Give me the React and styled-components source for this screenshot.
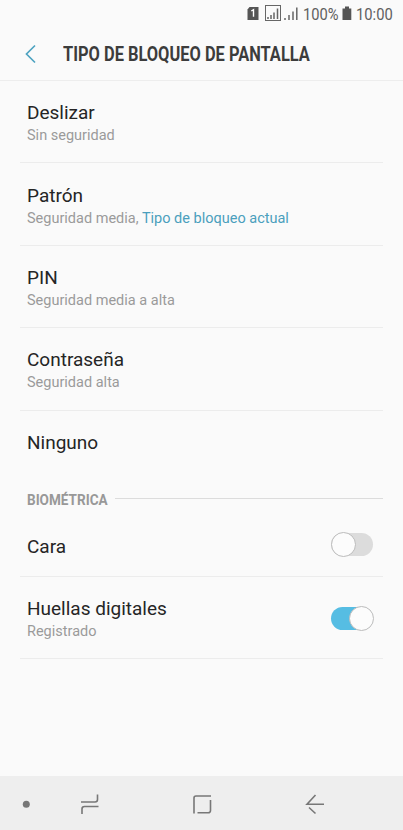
import styled, { createGlobalStyle } from "styled-components";

const GlobalStyle = createGlobalStyle`
    * {
        box-sizing: border-box;
    }

    body {
        margin: 0;
        background-color: #fafafa;
        font-family: Roboto, sans-serif;
    }
`;

const Screen = styled.div`
    display: flex;
    flex-direction: column;
    height: 830px;
    background-color: #fafafa;
    color: #252525;
`;

const StatusBar = styled.div`
    display: flex;
    justify-content: flex-end;
    height: 28px;
    padding-right: 9px;
    color: #606060;
`;

const StatusIcons = styled.svg`
    flex: none;
    width: 56px;
    height: 28px;
`;

const Battery = styled.svg`
    flex: none;
    width: 14px;
    height: 28px;
`;

const Narrow = styled.span`
    display: block;
    width: ${(props) => props.$width}px;
    font-size: ${(props) => props.$size}px;
    font-weight: ${(props) => props.$weight || 400};
    line-height: 28px;
    white-space: nowrap;
    transform: scaleX(${(props) => props.$scale});
    transform-origin: 0 50%;
`;

const Header = styled.header`
    display: flex;
    align-items: center;
    height: 53px;
    padding-left: 24px;
    border-bottom: 1px solid #ededed;
    color: #3c3c3c;
`;

const BackIcon = styled.svg`
    width: 39px;
    height: 22px;
`;

const Title = styled.h1`
    margin: 0;
    padding-top: 2px;
`;

const List = styled.main`
    flex: 1;
    padding: 0 20px;
`;

const Row = styled.div`
    display: flex;
    align-items: center;
    justify-content: space-between;
    height: ${(props) => props.$height || 82.4}px;
    padding: 1px 10px 0 7px;
    border-bottom: 1px solid ${(props) => (props.$last ? "transparent" : "#ececec")};
`;

const RowText = styled.div`
    padding-top: 4px;
`;

const Label = styled.div`
    font-size: 19px;
    line-height: 24px;
`;

const Hint = styled.div`
    font-size: 14.5px;
    line-height: 22px;
    color: #9a9a9a;
`;

const Current = styled.span`
    color: #4a9fbd;
`;

const Section = styled.div`
    display: flex;
    align-items: center;
    height: 28px;
    margin-top: 10px;
    padding-left: 7px;
    color: #989898;

    &::after {
        content: "";
        flex: 1;
        height: 1.5px;
        background-color: #dcdcdc;
    }
`;

const SectionTitle = styled.div`
    padding-top: 2px;
`;

const Track = styled.div`
    display: flex;
    align-items: center;
    justify-content: ${(props) => (props.$on ? "flex-end" : "flex-start")};
    width: 42px;
    height: 23px;
    border-radius: 12px;
    background-color: ${(props) => (props.$on ? "#56bde3" : "#dcdcdc")};
`;

const Thumb = styled.div`
    flex: none;
    width: 25px;
    height: 25px;
    margin: 0 -1px 0 0;
    border: 1px solid #bcbcbc;
    border-radius: 50%;
    background-color: #fcfcfc;
`;

const NavBar = styled.nav`
    height: 54px;
    background-color: #eeeeee;
`;

const options = [
    { label: "Deslizar", hint: "Sin seguridad" },
    { label: "Patrón", hint: "Seguridad media, ", current: "Tipo de bloqueo actual" },
    { label: "PIN", hint: "Seguridad media a alta" },
    { label: "Contraseña", hint: "Seguridad alta" },
];

const Switch = ({ on }) => (
    <Track $on={on}>
        <Thumb />
    </Track>
);

const App = () => {
    return (
        <>
            <GlobalStyle />
            <Screen>
                <StatusBar>
                    <StatusIcons viewBox="0 0 56 28">
                        <path d="M2.5 7H11.5v13H0.5V9.5z" fill="#555" />
                        <path d="M4.300 11l2.200-1.300v7" fill="none" stroke="#fff" strokeWidth="1.4" />
                        <rect x="18.5" y="5.5" width="15" height="15" fill="none" stroke="#666" />
                        <path d="M21 17v2M24 15v4M27 12.5V19M30.5 8.5v10.5" stroke="#666" strokeWidth="1.5" />
                        <path d="M38 18v2M42 15V20M46 11.5V20M49.8 7.5v12.5" stroke="#666" strokeWidth="1.5" />
                    </StatusIcons>
                    <Narrow $size={16.8} $width={39} $scale={0.875}>100%</Narrow>
                    <Battery viewBox="0 0 14 28">
                        <path d="M3 8.5V6.5h4v2h2.300V20H0.500V8.500z" fill="#555" />
                    </Battery>
                    <Narrow $size={16.8} $width={38} $scale={0.88}>10:00</Narrow>
                </StatusBar>
                <Header>
                    <BackIcon viewBox="0 0 39 22">
                        <path d="M11 2.5L2.5 11L11 19.5" fill="none" stroke="#4fa3c1" strokeWidth="1.7" />
                    </BackIcon>
                    <Title>
                        <Narrow $size={19.6} $weight={700} $width={247} $scale={0.838}>
                            TIPO DE BLOQUEO DE PANTALLA
                        </Narrow>
                    </Title>
                </Header>
                <List>
                    {options.map((option) => (
                        <Row key={option.label}>
                            <RowText>
                                <Label>{option.label}</Label>
                                <Hint>
                                    {option.hint}
                                    {option.current && <Current>{option.current}</Current>}
                                </Hint>
                            </RowText>
                        </Row>
                    ))}
                    <Row $height={64} $last>
                        <Label>Ninguno</Label>
                    </Row>
                    <Section>
                        <SectionTitle>
                            <Narrow $size={15.5} $weight={700} $width={88} $scale={0.875}>BIOMÉTRICA</Narrow>
                        </SectionTitle>
                    </Section>
                    <Row $height={64.4}>
                        <RowText>
                            <Label>Cara</Label>
                        </RowText>
                        <Switch />
                    </Row>
                    <Row>
                        <RowText>
                            <Label>Huellas digitales</Label>
                            <Hint>Registrado</Hint>
                        </RowText>
                        <Switch on />
                    </Row>
                </List>
                <NavBar>
                    <svg width="403" height="54" viewBox="0 0 403 54" fill="none" stroke="#777" strokeWidth="1.6">
                        <circle cx="26.3" cy="28.3" r="3.5" fill="#777" stroke="none" />
                        <path d="M81 26H95Q97.5 26 97.5 23.5V18.5" />
                        <path d="M98.5 30.5H84.5Q82 30.5 82 33V38" />
                        <path d="M211 20H196Q194 20 194 22V37.5" />
                        <path d="M210.5 24V34.5Q210.5 36.8 208 36.8H197.5" />
                        <path d="M324 28.3H307L315.5 19M309 31.5L315.5 37.5" />
                    </svg>
                </NavBar>
            </Screen>
        </>
    );
};

export default App;
